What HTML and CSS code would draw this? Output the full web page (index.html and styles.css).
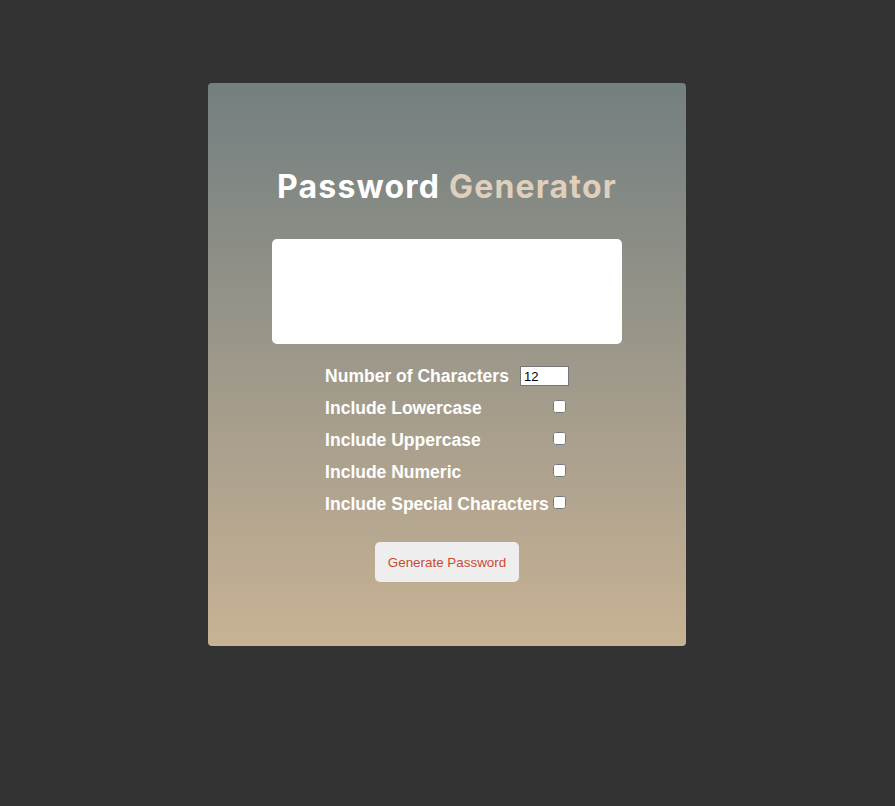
FILE: index.html
```html
<!DOCTYPE html>
<html lang="en">
<head>
<meta charset="utf-8">
<title>Password Generator</title>
<link rel="stylesheet" href="styles.css">
</head>
<body>
<main class="card">
  <h1 class="title">Password <span class="accent">Generator</span></h1>
  <textarea class="output" readonly></textarea>
  <form class="options">
    <div class="row">
      <label for="length">Number of Characters</label>
      <input id="length" class="num" type="number" value="12">
    </div>
    <div class="row">
      <label for="lower">Include Lowercase</label>
      <input id="lower" class="check" type="checkbox">
    </div>
    <div class="row">
      <label for="upper">Include Uppercase</label>
      <input id="upper" class="check" type="checkbox">
    </div>
    <div class="row">
      <label for="numeric">Include Numeric</label>
      <input id="numeric" class="check" type="checkbox">
    </div>
    <div class="row">
      <label for="special">Include Special Characters</label>
      <input id="special" class="check" type="checkbox">
    </div>
  </form>
  <button class="generate" type="button">Generate Password</button>
</main>
</body>
</html>
```
FILE: styles.css
```css
html, body {
  margin: 0;
  padding: 0;
}
body {
  background: #333333;
  min-height: 806px;
  padding-right: 1px;
  font-family: "Liberation Sans", Arial, sans-serif;
}
.card {
  width: 478px;
  height: 563px;
  box-sizing: border-box;
  margin: 83px auto 0;
  border-radius: 4px;
  background: linear-gradient(to bottom, #737f80 0%, #c8b294 100%);
  display: flex;
  flex-direction: column;
  align-items: center;
  padding-top: 84px;
}
.title {
  margin: 0;
  height: 40px;
  line-height: 40px;
  font-family: "Inter", "Open Sans", sans-serif;
  font-weight: 700;
  font-size: 32px;
  letter-spacing: 1.2px;
  color: #ffffff;
  white-space: nowrap;
}
.accent {
  color: #dfcfbb;
}
.output {
  margin-top: 32px;
  width: 350px;
  height: 105px;
  box-sizing: border-box;
  border: none;
  border-radius: 5px;
  background: #ffffff;
  resize: none;
  padding: 0;
}
.options {
  margin-top: 16px;
  display: flex;
  flex-direction: column;
}
.row {
  height: 32px;
  display: flex;
  align-items: center;
  justify-content: space-between;
  gap: 4px;
}
.row label {
  font-weight: 700;
  font-size: 17.5px;
  color: #ffffff;
}
.num {
  width: 49px;
  height: 20px;
  box-sizing: border-box;
  margin: 0 0 0 7px;
  padding: 0 3px;
  border: 1px solid #767676;
  font-family: "Liberation Sans", Arial, sans-serif;
  font-size: 13px;
}
.check {
  width: 13px;
  height: 13px;
  margin: -3px 3px 0 0;
}
.generate {
  margin-top: 22px;
  width: 144px;
  height: 40px;
  border: none;
  border-radius: 5px;
  background: #eeeeee;
  color: #cc4a31;
  font-family: "Liberation Sans", Arial, sans-serif;
  font-size: 13.4px;
  padding: 0;
}
```
